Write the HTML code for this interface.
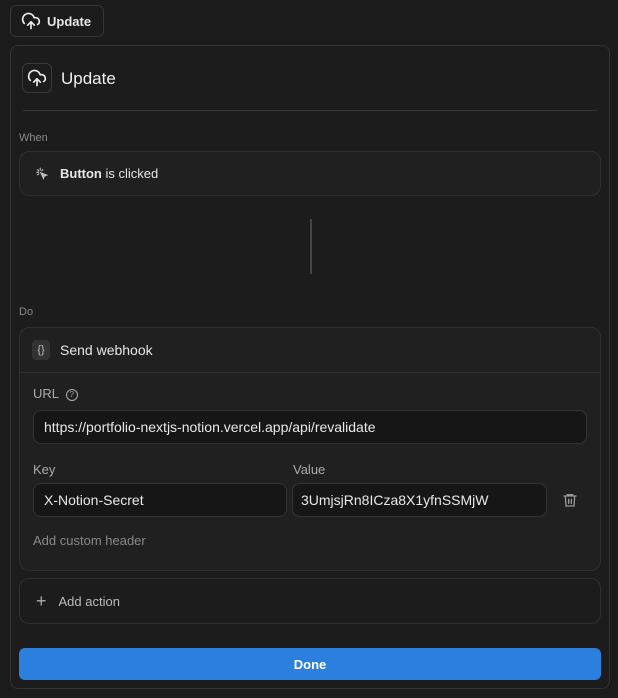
<!DOCTYPE html><html><head><style>
body{margin:0;width:618px;height:698px;background:#1b1b1b;font-family:"Liberation Sans",sans-serif;color:#e6e6e6;position:relative;overflow:hidden}
.a{position:absolute;box-sizing:border-box}
.lbl{font-size:11px;color:#8a8a8a}
.inp{background:#161616;border:1px solid #333;border-radius:8px;font-size:14px;color:#e8e8e8;padding-left:10px;display:flex;align-items:center}
</style></head><body>
<div class="a" style="left:10px;top:5px;width:94px;height:32px;border:1px solid #363636;border-radius:6px;font-weight:bold;font-size:13px;display:flex;align-items:center;padding-left:10px">
<svg width="20" height="20" viewBox="0 0 24 24" fill="none" stroke="#eee" stroke-width="2" stroke-linecap="round" stroke-linejoin="round"><path d="M12 13v8"/><path d="M4 14.9A7 7 0 1 1 15.7 8h1.8a4.5 4.5 0 0 1 2.5 8.2"/><path d="m8 17 4-4 4 4"/></svg><span style="margin-left:6px">Update</span></div>
<div class="a" style="left:10px;top:45px;width:600px;height:644px;border:1px solid #333;border-radius:8px;background:#1c1c1c"></div>
<div class="a" style="left:22px;top:63px;width:30px;height:30px;border:1px solid #3a3a3a;border-radius:6px;display:flex;align-items:center;justify-content:center">
<svg width="20" height="20" viewBox="0 0 24 24" fill="none" stroke="#eee" stroke-width="2" stroke-linecap="round" stroke-linejoin="round"><path d="M12 13v8"/><path d="M4 14.9A7 7 0 1 1 15.7 8h1.8a4.5 4.5 0 0 1 2.5 8.2"/><path d="m8 17 4-4 4 4"/></svg></div>
<div class="a" style="left:61px;top:69px;font-size:17px;color:#eee">Update</div>
<div class="a" style="left:23px;top:110px;width:575px;height:1px;background:#333"></div>
<div class="a lbl" style="left:19px;top:132px">When</div>
<div class="a" style="left:19px;top:151px;width:582px;height:45px;border:1px solid #2f2f2f;border-radius:10px;background:#202020;font-size:13px;display:flex;align-items:center;padding-left:15px">
<svg width="14" height="14" viewBox="0 0 24 24" fill="none" stroke="#bbb" stroke-width="2" stroke-linecap="round" style="margin-right:11px"><path d="M9 2v3M3 9h3M4.5 4.5l2 2M13.5 4.5l-2 2M4.5 13.5l2-2"/><path d="M10 10l10 4-4 1.5-1.5 4z" fill="#bbb"/></svg><b>Button</b>&nbsp;is clicked</div>
<div class="a" style="left:310px;top:219px;width:2px;height:55px;background:#444"></div>
<div class="a lbl" style="left:19px;top:306px">Do</div>
<div class="a" style="left:19px;top:327px;width:582px;height:244px;border:1px solid #2f2f2f;border-radius:10px;background:#202020"></div>
<div class="a" style="left:20px;top:372px;width:580px;height:1px;background:#2f2f2f"></div>
<div class="a" style="left:32px;top:340px;width:18px;height:20px;background:#333;border-radius:4px;font-size:11px;color:#bbb;text-align:center;line-height:20px">{}</div>
<div class="a" style="left:60px;top:342px;font-size:14px">Send webhook</div>
<div class="a" style="left:33px;top:386px;font-size:13px;color:#aaa">URL &nbsp;<span style="display:inline-block;width:10px;height:10px;border:1.3px solid #aaa;border-radius:50%;font-size:8px;text-align:center;line-height:10px;vertical-align:1px">?</span></div>
<div class="a inp" style="left:33px;top:410px;width:554px;height:34px">https://portfolio-nextjs-notion.vercel.app/api/revalidate</div>
<div class="a" style="left:33px;top:462px;font-size:13px;color:#aaa">Key</div>
<div class="a" style="left:293px;top:462px;font-size:13px;color:#aaa">Value</div>
<div class="a inp" style="left:33px;top:483px;width:254px;height:34px">X-Notion-Secret</div>
<div class="a inp" style="left:292px;top:483px;width:255px;height:34px;padding-left:8px">3UmjsjRn8ICza8X1yfnSSMjW</div>
<svg class="a" style="left:562px;top:491px" width="16" height="18" viewBox="0 0 24 24" fill="none" stroke="#999" stroke-width="2" stroke-linecap="round"><path d="M3 6h18M8 6V4h8v2M5 6l1 15h12l1-15M10 11v6M14 11v6"/></svg>
<div class="a" style="left:33px;top:533px;font-size:13px;color:#888">Add custom header</div>
<div class="a" style="left:19px;top:578px;width:582px;height:46px;border:1px solid #2f2f2f;border-radius:10px;font-size:13px;color:#bbb;display:flex;align-items:center;padding-left:16px"><span style="font-size:18px;margin-right:12px;color:#aaa">+</span>Add action</div>
<div class="a" style="left:19px;top:648px;width:582px;height:32px;border-radius:6px;background:#2b80de;color:#fff;font-weight:bold;font-size:13px;display:flex;align-items:center;justify-content:center">Done</div>
</body></html>
